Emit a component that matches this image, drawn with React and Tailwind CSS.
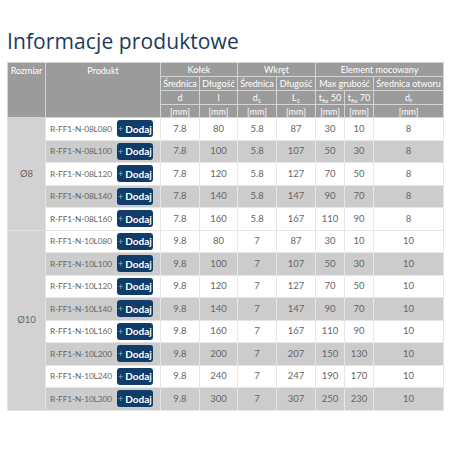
const rows8 = [
  ["R-FF1-N-08L080", "7.8", "80", "5.8", "87", "30", "10", "8"],
  ["R-FF1-N-08L100", "7.8", "100", "5.8", "107", "50", "30", "8"],
  ["R-FF1-N-08L120", "7.8", "120", "5.8", "127", "70", "50", "8"],
  ["R-FF1-N-08L140", "7.8", "140", "5.8", "147", "90", "70", "8"],
  ["R-FF1-N-08L160", "7.8", "160", "5.8", "167", "110", "90", "8"],
];
const rows10 = [
  ["R-FF1-N-10L080", "9.8", "80", "7", "87", "30", "10", "10"],
  ["R-FF1-N-10L100", "9.8", "100", "7", "107", "50", "30", "10"],
  ["R-FF1-N-10L120", "9.8", "120", "7", "127", "70", "50", "10"],
  ["R-FF1-N-10L140", "9.8", "140", "7", "147", "90", "70", "10"],
  ["R-FF1-N-10L160", "9.8", "160", "7", "167", "110", "90", "10"],
  ["R-FF1-N-10L200", "9.8", "200", "7", "207", "150", "130", "10"],
  ["R-FF1-N-10L240", "9.8", "240", "7", "247", "190", "170", "10"],
  ["R-FF1-N-10L300", "9.8", "300", "7", "307", "250", "230", "10"],
];

const th = "border border-[#d4d4d4] font-normal text-white text-center leading-none p-0 whitespace-nowrap overflow-hidden text-[9px]";

function Group({ size, rows }) {
  return rows.map((r, i) => (
    <tr key={r[0]} className={`h-[22.5px] ${i % 2 ? "bg-[#cccccc]" : "bg-white"}`}>
      {i === 0 && (
        <td rowSpan={rows.length} className="bg-[#d2d2d2] border border-[#e2e2e2] text-center text-[#666]">
          {size}
        </td>
      )}
      <td className="border border-[#e6e6e6] pl-[4px] pr-[7px] py-0">
        <div className="flex items-center justify-between">
          <span className="text-[#666] whitespace-nowrap text-[8.3px] tracking-[-0.1px]">{r[0]}</span>
          <button className="shrink-0 bg-[#0f3c68] text-white rounded-[3px] h-[17px] w-[36px] flex items-center justify-center gap-[2px] text-[10px] font-bold leading-none">
            <span className="font-normal text-[9px] text-[#9fb3c8]">+</span>Dodaj
          </button>
        </div>
      </td>
      {r.slice(1).map((v, j) => (
        <td key={j} className="border border-[#e6e6e6] text-center text-[#666] p-0">{v}</td>
      ))}
    </tr>
  ));
}

export default function App() {
  return (
    <div className="w-[452px] h-[452px] bg-white pt-[27px] pl-[7px]" style={{ fontFamily: '"Open Sans", "DejaVu Sans", sans-serif' }}>
      <h1 className="text-[21px] leading-[28px] text-[#1d3a5c] tracking-[0.1px] font-normal">Informacje produktowe</h1>
      <table className="mt-[7px] w-[436px] table-fixed border-collapse text-[9.5px]" style={{ fontFamily: 'Lato, "Liberation Sans", sans-serif' }}>
        <colgroup>
          <col className="w-[38px]" />
          <col className="w-[115px]" />
          <col className="w-[39px]" />
          <col className="w-[38px]" />
          <col className="w-[39px]" />
          <col className="w-[39px]" />
          <col className="w-[29px]" />
          <col className="w-[29px]" />
          <col className="w-[70px]" />
        </colgroup>
        <thead className="bg-[#9b9b9b]">
          <tr className="h-[14px]">
            <th rowSpan={4} className={`${th} align-top pt-[3px]`}>Rozmiar</th>
            <th rowSpan={4} className={`${th} align-top pt-[3px]`}>Produkt</th>
            <th colSpan={2} className={th}>Kołek</th>
            <th colSpan={2} className={th}>Wkręt</th>
            <th colSpan={3} className={th}>Element mocowany</th>
          </tr>
          <tr className="h-[14px]">
            <th className={th}>Średnica</th>
            <th className={th}>Długość</th>
            <th className={th}>Średnica</th>
            <th className={th}>Długość</th>
            <th colSpan={2} className={th}>Max grubość</th>
            <th className={th}>Średnica otworu</th>
          </tr>
          <tr className="h-[14px]">
            <th className={th}>d</th>
            <th className={th}>l</th>
            <th className={th}>d<sub className="text-[6px]">1</sub></th>
            <th className={th}>L<sub className="text-[6px]">1</sub></th>
            <th className={th}>t<sub className="text-[6px]">fix</sub> 50</th>
            <th className={th}>t<sub className="text-[6px]">fix</sub> 70</th>
            <th className={th}>d<sub className="text-[6px]">f</sub></th>
          </tr>
          <tr className="h-[13px]">
            {Array.from({ length: 7 }).map((_, i) => (
              <th key={i} className={th}>[mm]</th>
            ))}
          </tr>
        </thead>
        <tbody>
          <Group size="Ø8" rows={rows8} />
          <Group size="Ø10" rows={rows10} />
        </tbody>
      </table>
    </div>
  );
}
